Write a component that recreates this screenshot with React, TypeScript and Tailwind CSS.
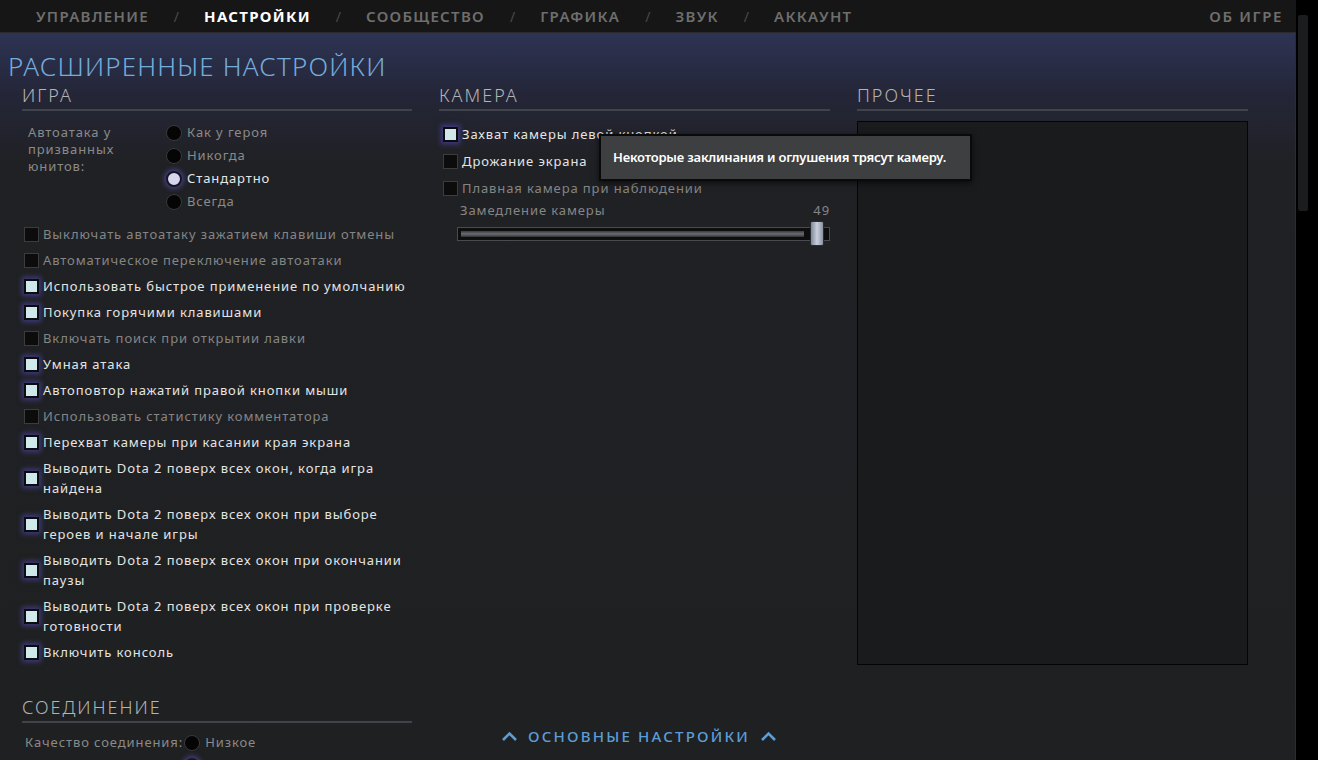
import React from "react";

const font = "font-['Noto_Sans',_'DejaVu_Sans',_sans-serif]";

const NavItems = ["УПРАВЛЕНИЕ", "НАСТРОЙКИ", "СООБЩЕСТВО", "ГРАФИКА", "ЗВУК", "АККАУНТ"];

interface CheckProps {
  label: string;
  checked?: boolean;
  bright?: boolean;
}

const CheckBox = ({ checked }: { checked?: boolean }) =>
  checked ? (
    <span className="w-[15px] h-[15px] shrink-0 bg-[#cfe9ea] border-2 border-[#0b0b12] shadow-[0_0_5px_2px_rgba(90,80,200,0.55)]" />
  ) : (
    <span className="w-[15px] h-[15px] shrink-0 bg-[#0c0c0c] border border-[#3c3c3c]" />
  );

const CheckRow = ({ label, checked, bright }: CheckProps) => (
  <div className="flex items-center gap-[4px]">
    <CheckBox checked={checked} />
    <p
      className={`text-[13px] leading-[20px] tracking-[0.9px] ${
        checked || bright ? "text-[#e4e4e4]" : "text-[#858585]"
      }`}
    >
      {label}
    </p>
  </div>
);

const Radio = ({ label, on }: { label?: string; on?: boolean }) => (
  <div className="flex items-center gap-[5px] h-[23px]">
    {on ? (
      <span className="w-[16px] h-[16px] rounded-full bg-[#d6d6ee] border-2 border-[#151522] shadow-[0_0_5px_2px_rgba(100,90,210,0.55)]" />
    ) : (
      <span className="w-[16px] h-[16px] rounded-full bg-[#050505] border border-[#3a3a3a]" />
    )}
    {label && (
      <span className={`text-[13px] tracking-[0.9px] ${on ? "text-[#e6e6e6]" : "text-[#8a8a8a]"}`}>
        {label}
      </span>
    )}
  </div>
);

const Heading = ({ title }: { title: string }) => (
  <div>
    <h3 className="text-[18px] leading-[22px] tracking-[2px] text-[#b4b4b4] font-light">{title}</h3>
    <div className="h-[2px] mt-[3px] bg-[#41434a]" />
  </div>
);

const Chevron = () => (
  <svg width="17" height="11" viewBox="0 0 17 11" fill="none">
    <path d="M2 9 L8.5 2.5 L15 9" stroke="#5d9dd6" strokeWidth="2.6" />
  </svg>
);

export default function App() {
  return (
    <div className={`w-[1318px] h-[760px] bg-black flex overflow-hidden ${font}`}>
      <div className="w-[1296px] flex flex-col">
        {/* top nav */}
        <nav className="h-[33px] shrink-0 bg-[#161616] border-b border-[#2a2a2e] flex items-center pl-[36px] pr-[13px]">
          {NavItems.map((item, i) => (
            <React.Fragment key={item}>
              {i > 0 && <span className="text-[#4a4a4a] text-[14px] mx-[25px]">/</span>}
              <span
                className={`text-[15px] tracking-[1.3px] ${
                  i === 1 ? "text-white font-bold" : "text-[#6e6e6e] font-semibold"
                }`}
              >
                {item}
              </span>
            </React.Fragment>
          ))}
          <span className="ml-auto text-[15px] tracking-[1.6px] text-[#6e6e6e] font-semibold">ОБ ИГРЕ</span>
        </nav>

        {/* panel */}
        <div className="relative flex-1 bg-[linear-gradient(180deg,#2d3353_0px,#242638_60px,#202124_130px,#1f2022_100%)] border-r border-[#2b2c30] overflow-hidden">
          <h1 className="mt-[18px] ml-[8px] text-[26px] leading-[30px] tracking-[1.2px] text-[#74acdc] font-light">
            РАСШИРЕННЫЕ НАСТРОЙКИ
          </h1>

          <div className="mt-[3px] ml-[22px] grid grid-cols-[390px_391px_391px] gap-x-[27px]">
            {/* game column */}
            <div className="flex flex-col">
              <Heading title="ИГРА" />
              <div className="mt-[10px] flex">
                <p className="w-[144px] pl-[6px] pt-[3px] text-[13px] leading-[17px] tracking-[0.9px] text-[#8a8a8a]">
                  Автоатака у призванных юнитов:
                </p>
                <div className="flex flex-col">
                  <Radio label="Как у героя" />
                  <Radio label="Никогда" />
                  <Radio label="Стандартно" on />
                  <Radio label="Всегда" />
                </div>
              </div>
              <div className="mt-[11px] ml-[2px] flex flex-col gap-[6px]">
                <CheckRow label="Выключать автоатаку зажатием клавиши отмены" />
                <CheckRow label="Автоматическое переключение автоатаки" />
                <CheckRow label="Использовать быстрое применение по умолчанию" checked />
                <CheckRow label="Покупка горячими клавишами" checked />
                <CheckRow label="Включать поиск при открытии лавки" />
                <CheckRow label="Умная атака" checked />
                <CheckRow label="Автоповтор нажатий правой кнопки мыши" checked />
                <CheckRow label="Использовать статистику комментатора" />
                <CheckRow label="Перехват камеры при касании края экрана" checked />
                <CheckRow label="Выводить Dota 2 поверх всех окон, когда игра найдена" checked />
                <CheckRow label="Выводить Dota 2 поверх всех окон при выборе героев и начале игры" checked />
                <CheckRow label="Выводить Dota 2 поверх всех окон при окончании паузы" checked />
                <CheckRow label="Выводить Dota 2 поверх всех окон при проверке готовности" checked />
                <CheckRow label="Включить консоль" checked />
              </div>
              <div className="mt-[34px]">
                <Heading title="СОЕДИНЕНИЕ" />
              </div>
              <div className="mt-[8px] ml-[3px] flex items-start">
                <span className="text-[13px] leading-[23px] tracking-[0.9px] text-[#8a8a8a] mr-[1px]">
                  Качество соединения:
                </span>
                <div className="flex flex-col">
                  <Radio label="Низкое" />
                  <Radio on />
                </div>
              </div>
            </div>

            {/* camera column */}
            <div className="flex flex-col">
              <Heading title="КАМЕРА" />
              <div className="mt-[13px] ml-[4px] flex flex-col gap-[7px]">
                <CheckRow label="Захват камеры левой кнопкой" checked />
                <CheckRow label="Дрожание экрана" bright />
                <CheckRow label="Плавная камера при наблюдении" />
              </div>
              <div className="mt-[2px] ml-[21px] flex justify-between text-[13px] leading-[20px] tracking-[0.9px] text-[#858585]">
                <span>Замедление камеры</span>
                <span>49</span>
              </div>
              <div className="mt-[1px] ml-[18px] relative h-[25px] flex items-center">
                <div className="w-full h-[14px] bg-[#0e0e0f] border border-[#4a4b4f] p-[3px]">
                  <div className="h-full w-[94%] bg-[linear-gradient(180deg,#3a3b3e,#6a6c70_50%,#2f3033)]" />
                </div>
                <div className="absolute left-[353px] top-0 w-[14px] h-[25px] rounded-[2px] bg-[linear-gradient(90deg,#7f8796,#c9d0dc_50%,#8a92a2)] border border-[#2a2d35]" />
              </div>
            </div>

            {/* misc column */}
            <div className="flex flex-col">
              <Heading title="ПРОЧЕЕ" />
              <div className="mt-[10px] h-[544px] bg-[#1a1b1d] border border-[#050505]" />
            </div>
          </div>

          {/* tooltip */}
          <div className="absolute left-[599px] top-[101px] w-[373px] h-[47px] bg-[#3d3f41] border-2 border-[#0a0a0a] flex items-center pl-[12px] shadow-[0_2px_6px_rgba(0,0,0,0.6)]">
            <span className="text-[13px] font-semibold tracking-[-0.2px] text-white">
              Некоторые заклинания и оглушения трясут камеру.
            </span>
          </div>

          {/* bottom link */}
          <div className="absolute left-[501px] top-[692px] flex items-center gap-[10px]">
            <Chevron />
            <span className="text-[15px] tracking-[2.2px] text-[#5d9dd6] font-medium">ОСНОВНЫЕ НАСТРОЙКИ</span>
            <Chevron />
          </div>
        </div>
      </div>

      {/* scrollbar */}
      <div className="w-[22px] pt-[15px] pl-[2px]">
        <div className="w-[10px] h-[196px] bg-[#1b1c1e] rounded-[2px]" />
      </div>
    </div>
  );
}
